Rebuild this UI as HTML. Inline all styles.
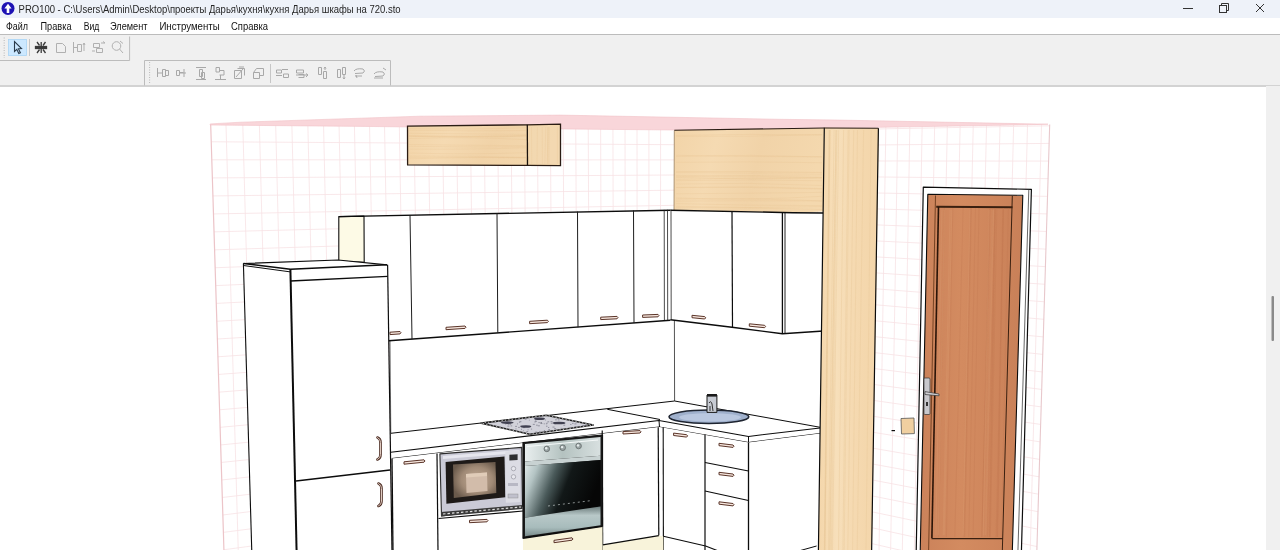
<!DOCTYPE html>
<html><head><meta charset="utf-8">
<style>
html,body{margin:0;padding:0;width:1280px;height:550px;overflow:hidden;background:#fff;font-family:"Liberation Sans",sans-serif;}
#title{position:absolute;left:0;top:0;width:1280px;height:18px;background:#eef2f9;}
#menu{position:absolute;left:0;top:18px;width:1280px;height:16px;background:#fff;border-bottom:1px solid #bcbcbc;}
#tb{position:absolute;left:0;top:35px;width:1280px;height:49.5px;background:#f0f0f0;border-bottom:2px solid #d3d3d3;}
svg{position:absolute;left:0;top:0;will-change:transform;}
</style></head><body>
<div id="title"></div>
<div id="menu"></div>
<div id="tb"></div>
<svg width="1280" height="550" viewBox="0 0 1280 550" font-family="Liberation Sans, sans-serif">
  <!-- title -->
  <circle cx="8" cy="8.4" r="6.5" fill="#1e12b4"/>
  <path d="M8 3.8 L11.6 8.4 L9.3 8.4 L9.3 13 L6.7 13 L6.7 8.4 L4.4 8.4 Z" fill="#fff"/>
  <text x="18.6" y="12.6" font-size="11" fill="#262626" textLength="382" lengthAdjust="spacingAndGlyphs">PRO100 - C:\Users\Admin\Desktop\проекты Дарья\кухня\кухня Дарья шкафы на 720.sto</text>
  <!-- window controls -->
  <rect x="1183" y="8" width="10" height="1" fill="#333"/>
  <g fill="none" stroke="#333" stroke-width="1">
    <rect x="1219.5" y="5.5" width="7" height="7"/>
    <path d="M1221.5 5.5 V3.5 H1228.5 V10.5 H1226.5"/>
    <path d="M1256 4 L1264 12 M1264 4 L1256 12"/>
  </g>
  <!-- menu -->
  <g font-size="10" fill="#111">
    <text x="6" y="29.5" textLength="22" lengthAdjust="spacingAndGlyphs">Файл</text>
    <text x="40.5" y="29.5" textLength="31" lengthAdjust="spacingAndGlyphs">Правка</text>
    <text x="83.7" y="29.5" textLength="15.5" lengthAdjust="spacingAndGlyphs">Вид</text>
    <text x="110" y="29.5" textLength="37.5" lengthAdjust="spacingAndGlyphs">Элемент</text>
    <text x="159.4" y="29.5" textLength="60.3" lengthAdjust="spacingAndGlyphs">Инструменты</text>
    <text x="231" y="29.5" textLength="37" lengthAdjust="spacingAndGlyphs">Справка</text>
  </g>

  <!-- toolbar 1 -->
  <path d="M129.6 36.5 V60.5 H0" fill="none" stroke="#bcbcbc" stroke-width="1"/>
  <path d="M4.2 37.5 V58" stroke="#b8b8b8" stroke-width="1" stroke-dasharray="1 1.5"/>
  <rect x="8.5" y="39.5" width="18" height="16" fill="#cce8ff" stroke="#a8d4f5" stroke-width="0.8"/>
  <rect x="29" y="39" width="1" height="17" fill="#c6c6c6"/>
  <path d="M14.5 41.5 L14.5 51.5 L16.8 49.3 L18.8 53.5 L20.4 52.7 L18.4 48.7 L21.5 48.5 Z" fill="none" stroke="#2a3a4a" stroke-width="1.1"/>
  <g stroke="#3a3a3a" stroke-width="1.3" fill="none">
    <path d="M35.5 47.5 H47 M37 42 L39.5 45.5 M45.5 42 L43 45.5 M37 53 L39.5 49.5 M45.5 53 L43 49.5 M41.2 42 V53"/>
    <rect x="35.5" y="46.5" width="11" height="2" fill="#3a3a3a"/>
  </g>
  <g stroke="#b0b0b0" stroke-width="1" fill="none">
    <path d="M56.5 43.5 H62.5 L65.5 46.5 V52.5 H56.5 Z"/>
    <path d="M73.5 42 V53 M74 47.5 H77 M77.5 44.5 H81.5 V51.5 H77.5 Z M84 43 V51 M84 43 L83 45 M84 43 L85 45"/>
    <path d="M93.5 43.5 H99.5 V47.5 H93.5 Z M96.5 48.5 H102.5 V52.5 H96.5 Z M101 43 H105 L103 41.5 M92 51 H95"/>
    <circle cx="116.5" cy="46" r="4.3"/><path d="M119.5 49 L123 53 M120 41 L123 43.5"/>
  </g>
  <!-- toolbar 2 -->
  <path d="M144.5 85.5 V60.5 H390.5 V85.5" fill="none" stroke="#bcbcbc" stroke-width="1"/>
  <path d="M149.6 62 V84" stroke="#b8b8b8" stroke-width="1" stroke-dasharray="1 1.5"/>
  <rect x="270" y="64" width="1" height="19" fill="#c6c6c6"/>
  <g stroke="#a8a8a8" stroke-width="1" fill="none">
    <path d="M157.5 68 V77 M158 73 H163 M162.5 69.5 H165.5 V76.5 H162.5 Z M165.5 70.5 H168.5 V75.5 H165.5"/>
    <path d="M176.5 70.5 H179.5 V75.5 H176.5 Z M179.5 72.5 H183.5 M184 69 V77 M180 73 H186"/>
    <path d="M196 67.5 H206 M199.5 69.5 H202.5 V76.5 H199.5 Z M201.5 72.5 H204.5 V78.5 H201.5 Z M196 79.5 H206"/>
    <path d="M216 67.5 V72 H219.5 V67.5 Z M219.5 70.5 H224 V75 H219.5 M220.5 75 V79 M215 79.5 H226"/>
    <path d="M234.5 70.5 H241.5 V78.5 H234.5 Z M237.5 68.5 H244.5 V75.5 M239 67 L244 67 M236 77 L243 69"/>
    <path d="M253.5 72.5 H259.5 V78.5 H253.5 Z M256.5 68.5 H263.5 V75.5 H259.5 M253.5 72.5 L256.5 68.5"/>
    <path d="M276.5 70 H281.5 V73 H276.5 Z M283.5 74 H288.5 V77.5 H283.5 Z M276 75.5 H282 M282 69.5 H288"/>
    <path d="M296.5 70 H303.5 V73 H296.5 Z M298.5 74.5 H304 V77.5 H298.5 M296 75 H308 L306 73.5 M306 77 L308 75"/>
    <path d="M318.5 67.5 H321.5 V74.5 H318.5 Z M323.5 71.5 H326.5 V78.5 H323.5 Z M325 67 V70 M324 68.5 L325 67 L326 68.5"/>
    <path d="M337.5 69.5 H340.5 V77.5 H337.5 Z M342.5 67.5 H345.5 V74.5 H342.5 Z M344 75 V79 M343 77.5 L344 79 L345 77.5"/>
    <path d="M354 71 Q356 68 363 69 Q366 71 363 73 L355 73.5 M356 75 L357 78 M355 76 H362"/>
    <path d="M374 74 Q376 71 383 72 Q386 74 383 76 L375 76.5 M374 78 H383 M383 68 L386 70"/>
  </g>
  <!-- canvas -->
  <g id="scene">
<defs>
<clipPath id="cl"><path d="M210.7 124.6 L674 130 L674 552 L224 552 Z"/></clipPath>
<clipPath id="cr"><path d="M674 130 L1049.7 124.4 L1036.8 552 L674 552 Z"/></clipPath>
<linearGradient id="wood1" x1="0" y1="0" x2="1" y2="0.15"><stop offset="0" stop-color="#f2d4a8"/><stop offset="0.3" stop-color="#f5dab2"/><stop offset="0.6" stop-color="#f1d3a8"/><stop offset="1" stop-color="#f4d8ae"/></linearGradient>
<linearGradient id="woodv" x1="0" y1="0" x2="1" y2="0"><stop offset="0" stop-color="#f4d6aa"/><stop offset="0.3" stop-color="#f7dfba"/><stop offset="0.6" stop-color="#f5d9b0"/><stop offset="1" stop-color="#f3d5a9"/></linearGradient>
<linearGradient id="doorg" x1="0" y1="0" x2="1" y2="0"><stop offset="0" stop-color="#cb825a"/><stop offset="0.4" stop-color="#d38b60"/><stop offset="0.7" stop-color="#cf865c"/><stop offset="1" stop-color="#c88058"/></linearGradient>
<linearGradient id="ovenwin" x1="0" y1="0" x2="1" y2="0.3"><stop offset="0" stop-color="#e4ecec"/><stop offset="0.18" stop-color="#b4c4c4"/><stop offset="0.42" stop-color="#4a5a5a"/><stop offset="0.62" stop-color="#121818"/><stop offset="1" stop-color="#060606"/></linearGradient>
<linearGradient id="silver" x1="0" y1="0" x2="1" y2="0"><stop offset="0" stop-color="#e8eeee"/><stop offset="0.5" stop-color="#b4c2c0"/><stop offset="1" stop-color="#d8e0e0"/></linearGradient>
<linearGradient id="silver2" x1="0" y1="0" x2="0" y2="1"><stop offset="0" stop-color="#6a7a7a"/><stop offset="0.3" stop-color="#b8c8c8"/><stop offset="0.7" stop-color="#a8bcbc"/><stop offset="1" stop-color="#7a8c8c"/></linearGradient>
<radialGradient id="mwin" cx="0.55" cy="0.5" r="0.6"><stop offset="0" stop-color="#c4ac96"/><stop offset="0.6" stop-color="#a08a76"/><stop offset="1" stop-color="#6a5a4c"/></radialGradient>
</defs>
<g clip-path="url(#cl)"><path d="M225.8 118L238.3 552M242.6 118L254.6 552M259.2 118L270.7 552M275.5 118L286.6 552M291.7 118L302.3 552M307.7 118L317.8 552M323.4 118L333.1 552M338.9 118L348.2 552M354.3 118L363.0 552M369.4 118L377.8 552M384.4 118L392.3 552M399.2 118L406.6 552M413.8 118L420.8 552M428.2 118L434.7 552M442.4 118L448.6 552M456.5 118L462.2 552M470.3 118L475.7 552M484.1 118L489.0 552M497.6 118L502.1 552M511.0 118L515.1 552M524.3 118L528.0 552M537.3 118L540.7 552M550.3 118L553.3 552M563.1 118L565.7 552M575.7 118L578.0 552M588.2 118L590.1 552M600.6 118L602.1 552M612.9 118L614.0 552M625.0 118L625.8 552M637.0 118L637.4 552M648.9 118L648.9 552M660.6 118L660.3 552M200 105.3L690 114.5M200 123.5L690 129.7M200 141.7L690 144.8M200 159.8L690 159.9M200 178.0L690 174.9M200 196.1L690 190.0M200 214.2L690 205.0M200 232.2L690 220.0M200 250.3L690 235.0M200 268.3L690 250.0M200 286.3L690 264.9M200 304.2L690 279.9M200 322.2L690 294.8M200 340.1L690 309.6M200 358.0L690 324.5M200 375.8L690 339.4M200 393.7L690 354.2M200 411.5L690 369.0M200 429.2L690 383.7M200 447.0L690 398.5M200 464.7L690 413.2M200 482.4L690 428.0M200 500.1L690 442.7M200 517.8L690 457.3M200 535.4L690 472.0M200 553.0L690 486.6M200 570.6L690 501.2" stroke="#f7e2e5" stroke-width="0.8" fill="none"/></g>
<g clip-path="url(#cr)"><path d="M721.8 118L719.7 552M730.6 118L728.3 552M739.6 118L737.0 552M748.8 118L745.9 552M758.2 118L755.0 552M767.8 118L764.3 552M777.6 118L773.8 552M787.5 118L783.5 552M797.7 118L793.4 552M808.0 118L803.4 552M818.6 118L813.6 552M829.3 118L824.1 552M840.3 118L834.7 552M851.4 118L845.5 552M862.7 118L856.5 552M874.3 118L867.7 552M886.0 118L879.0 552M897.9 118L890.6 552M910.0 118L902.3 552M922.3 118L914.3 552M934.8 118L926.4 552M947.5 118L938.7 552M960.3 118L951.2 552M973.4 118L963.9 552M986.7 118L976.8 552M1000.2 118L989.9 552M1013.8 118L1003.1 552M1027.7 118L1016.6 552M1041.7 118L1030.2 552M1056.0 118L1044.0 552M660 119.1L1060 107.9M660 133.0L1060 125.6M660 146.9L1060 143.3M660 160.8L1060 161.1M660 174.8L1060 178.8M660 188.7L1060 196.6M660 202.6L1060 214.3M660 216.5L1060 232.0M660 230.5L1060 249.8M660 244.4L1060 267.5M660 258.3L1060 285.3M660 272.2L1060 303.0M660 286.2L1060 320.7M660 300.1L1060 338.5M660 314.0L1060 356.2M660 327.9L1060 374.0M660 341.9L1060 391.7M660 355.8L1060 409.4M660 369.7L1060 427.2M660 383.6L1060 444.9M660 397.6L1060 462.7M660 411.5L1060 480.4M660 425.4L1060 498.1M660 439.3L1060 515.9M660 453.3L1060 533.6M660 467.2L1060 551.4M660 481.1L1060 569.1M660 495.0L1060 586.8" stroke="#f7e2e5" stroke-width="0.8" fill="none"/></g>
<path d="M210.7 124.6 L224 552" stroke="#ecc4c8" stroke-width="1.2" fill="none"/>
<path d="M1049.7 124.4 L1036.8 552" stroke="#e8c8cc" stroke-width="1.1" fill="none"/>
<path d="M210.3 123.9 L241 122.2 L420 116.2 L560 115.1 L780 119.3 L840 120.1 L1048 124.2 L1027 124.8 L879.5 127.3 L780 128.9 L673.4 130 L560 128.9 L372 126.5 L210 125 Z" fill="#f9d6da" stroke="#f2c2c7" stroke-width="0.6"/>
<path d="M407.5 126.2 L527 124.8 L560.5 124.2 L560.5 165.6 L527 165.4 L407.6 164.8 Z" fill="url(#wood1)" stroke="#2a1c14" stroke-width="1.3"/>
<path d="M527.3 124.8 L527.5 165.4" stroke="#1a120c" stroke-width="1.3"/>
<path d="M530 126 L559 126 L559 164 L530 164 Z" fill="#f2d9b2" opacity="0.6"/>
<path d="M674.3 130.3 L824.3 128 L824 211.5 L792.6 212.7 L674 211 Z" fill="url(#wood1)" stroke="none"/>
<path d="M674.3 130.6 L674 211" stroke="#9a8060" stroke-width="0.8"/>
<path d="M390.0 340.5 L670.4 320.2 L674.0 320.0 L823.0 331.0 L820.2 427.3 L674.6 401.0 L390.8 433.3 Z" fill="#ffffff" stroke="none" stroke-width="1.2" stroke-linejoin="round"/>
<path d="M390.0 340.0 L390.8 433.3" stroke="#666" stroke-width="0.90" fill="none" stroke-linejoin="round"/>
<path d="M674.4 320.0 L674.6 401.0" stroke="#555" stroke-width="1.00" fill="none" stroke-linejoin="round"/>
<path d="M409 136.3 Q470 136.5 526 135.9M409 149.1 Q470 149.6 526 147.8M409 128.5 Q470 129.8 526 127.7M409 136.2 Q470 138.2 526 136.1M409 157.3 Q470 157.2 526 157.7M409 133.3 Q470 133.8 526 134.4M409 146.3 Q470 147.3 526 146.8M409 130.2 Q470 131.3 526 130.5M409 138.5 Q470 136.7 526 139.6M409 144.5 Q470 145.4 526 145.7M409 153.0 Q470 154.7 526 152.7M409 156.0 Q470 155.8 526 157.3M409 158.8 Q470 157.2 526 157.7M409 135.6 Q470 137.5 526 135.4M676 180.6 Q750 179.4 822 180.7M676 162.3 Q750 161.4 822 162.7M676 177.4 Q750 179.8 822 178.1M676 203.6 Q750 205.7 822 205.6M676 184.0 Q750 182.0 822 185.5M676 206.3 Q750 208.7 822 206.6M676 187.3 Q750 185.5 822 188.6M676 176.6 Q750 175.3 822 174.8M676 197.9 Q750 200.8 822 196.3M676 193.8 Q750 193.3 822 192.4M676 155.3 Q750 156.9 822 156.8M676 136.4 Q750 137.0 822 134.5M676 187.6 Q750 186.6 822 189.1M676 207.5 Q750 207.6 822 209.5M676 156.5 Q750 154.0 822 156.9M676 135.4 Q750 133.6 822 135.0M676 179.4 Q750 177.3 822 177.6M676 199.0 Q750 197.8 822 200.8M676 201.1 Q750 200.4 822 201.0M676 172.5 Q750 173.4 822 172.9M676 175.5 Q750 176.2 822 177.3M676 171.5 Q750 171.1 822 172.4" stroke="#e4c090" stroke-width="0.8" fill="none" opacity="0.3"/>
<path d="M537.4 127 L537.0 164M557.4 127 L557.4 164M545.8 127 L544.8 164M542.2 127 L542.4 164M531.5 127 L531.8 164M548.1 127 L547.2 164M547.9 127 L547.9 164M549.3 127 L549.0 164" stroke="#e4c090" stroke-width="0.8" fill="none" opacity="0.3"/>
<path d="M338.8 216.6 L670.4 210.2 L670.4 319.7 L388.8 340.8 L364.0 262.0 Z" fill="#ffffff" stroke="none" stroke-width="1.2" stroke-linejoin="round"/>
<path d="M338.8 216.6 L364.0 216.1 L364.2 262.2 L338.8 261.0 Z" fill="#fdfae6" stroke="#0c0c0c" stroke-width="1.1" stroke-linejoin="round"/>
<path d="M338.8 216.6 L670.4 210.2" stroke="#0c0c0c" stroke-width="1.40" fill="none" stroke-linejoin="round"/>
<path d="M388.8 340.8 L670.4 320.2" stroke="#0c0c0c" stroke-width="1.40" fill="none" stroke-linejoin="round"/>
<path d="M410.0 215.0 L412.0 339.1" stroke="#1e1e1e" stroke-width="1.00" fill="none" stroke-linejoin="round"/>
<path d="M497.0 213.2 L497.8 332.9" stroke="#1e1e1e" stroke-width="1.00" fill="none" stroke-linejoin="round"/>
<path d="M577.5 211.6 L578.0 327.2" stroke="#1e1e1e" stroke-width="1.00" fill="none" stroke-linejoin="round"/>
<path d="M633.5 210.5 L634.0 323.1" stroke="#1e1e1e" stroke-width="1.00" fill="none" stroke-linejoin="round"/>
<path d="M670.4 210.2 L792.6 212.7 L823.5 213.0 L823.5 331.0 L782.4 333.7 L732.0 327.3 L670.4 319.7 Z" fill="#ffffff" stroke="none" stroke-width="1.2" stroke-linejoin="round"/>
<path d="M670.4 210.2 L792.6 212.7 L823.5 213.0" stroke="#0c0c0c" stroke-width="1.40" fill="none" stroke-linejoin="round"/>
<path d="M670.4 319.7 L732.0 327.3 L782.4 333.7 L823.5 331.0" stroke="#0c0c0c" stroke-width="1.40" fill="none" stroke-linejoin="round"/>
<path d="M732.0 211.4 L732.5 327.3" stroke="#0c0c0c" stroke-width="1.20" fill="none" stroke-linejoin="round"/>
<path d="M664.2 209.9 L664.4 320.0" stroke="#1e1e1e" stroke-width="0.80" fill="none" stroke-linejoin="round"/>
<path d="M667.5 209.8 L667.7 320.0" stroke="#1e1e1e" stroke-width="0.80" fill="none" stroke-linejoin="round"/>
<path d="M671.0 209.8 L671.2 320.0" stroke="#1e1e1e" stroke-width="0.80" fill="none" stroke-linejoin="round"/>
<path d="M782.4 212.5 L782.4 333.7" stroke="#0c0c0c" stroke-width="1.30" fill="none" stroke-linejoin="round"/>
<path d="M785.0 212.6 L785.0 333.4" stroke="#0c0c0c" stroke-width="0.90" fill="none" stroke-linejoin="round"/>
<path d="M390.0 332.2 L400.0 331.5 L401.0 332.7 L400.0 333.9 L390.0 334.6 Z" fill="#f6e6de" stroke="#5a3428" stroke-width="1"/>
<path d="M446.0 327.3 L465.0 326.0 L466.0 327.2 L465.0 328.4 L446.0 329.7 Z" fill="#f6e6de" stroke="#5a3428" stroke-width="1"/>
<path d="M529.6 321.3 L547.4 320.2 L548.4 321.4 L547.4 322.6 L529.6 323.7 Z" fill="#f6e6de" stroke="#5a3428" stroke-width="1"/>
<path d="M600.7 317.2 L617.0 316.4 L618.0 317.6 L617.0 318.8 L600.7 319.6 Z" fill="#f6e6de" stroke="#5a3428" stroke-width="1"/>
<path d="M642.6 315.0 L658.0 314.4 L659.0 315.6 L658.0 316.8 L642.6 317.4 Z" fill="#f6e6de" stroke="#5a3428" stroke-width="1"/>
<path d="M692.0 315.3 L704.7 316.6 L705.7 317.8 L704.7 319.0 L692.0 317.7 Z" fill="#f6e6de" stroke="#5a3428" stroke-width="1"/>
<path d="M749.3 323.8 L764.6 325.3 L765.6 326.5 L764.6 327.7 L749.3 326.2 Z" fill="#f6e6de" stroke="#5a3428" stroke-width="1"/>
<path d="M390.8 433.3 L674.6 401.0 L820.2 427.3 L820.0 433.6 L748.5 442.0 L661.0 426.5 L392.0 458.5 Z" fill="#ffffff" stroke="none" stroke-width="1.2" stroke-linejoin="round"/>
<path d="M390.8 433.3 L674.6 401.0 L820.2 427.3" stroke="#0c0c0c" stroke-width="1.00" fill="none" stroke-linejoin="round"/>
<path d="M390.8 452.2 L659.0 420.5 L748.5 436.4 L820.0 428.0" stroke="#0c0c0c" stroke-width="1.05" fill="none" stroke-linejoin="round"/>
<path d="M392.0 458.5 L659.0 427.0 L748.5 442.5 L820.0 433.6" stroke="#0c0c0c" stroke-width="1.05" fill="none" stroke-linejoin="round"/>
<path d="M607.3 409.3 L660.0 419.5" stroke="#0c0c0c" stroke-width="1.00" fill="none" stroke-linejoin="round"/>
<path d="M659.0 420.5 L659.5 427.0" stroke="#0c0c0c" stroke-width="1.00" fill="none" stroke-linejoin="round"/>
<path d="M748.5 436.4 L748.5 442.5" stroke="#0c0c0c" stroke-width="1.00" fill="none" stroke-linejoin="round"/>
<path d="M392.0 458.5 L659.0 427.0 L662.7 427.5 L748.5 442.5 L820.0 433.6 L818.0 552.0 L392.0 552.0 Z" fill="#ffffff" stroke="none" stroke-width="1.2" stroke-linejoin="round"/>
<path d="M392.0 458.5 L393.0 552.0" stroke="#0c0c0c" stroke-width="1.30" fill="none" stroke-linejoin="round"/>
<path d="M437.0 453.5 L438.0 552.0" stroke="#0c0c0c" stroke-width="1.20" fill="none" stroke-linejoin="round"/>
<path d="M602.2 430.5 L602.7 552.0" stroke="#0c0c0c" stroke-width="1.20" fill="none" stroke-linejoin="round"/>
<path d="M658.2 427.3 L658.8 535.6" stroke="#0c0c0c" stroke-width="1.20" fill="none" stroke-linejoin="round"/>
<path d="M663.2 427.3 L663.4 552.0" stroke="#0c0c0c" stroke-width="1.10" fill="none" stroke-linejoin="round"/>
<path d="M705.0 434.5 L705.0 552.0" stroke="#0c0c0c" stroke-width="1.20" fill="none" stroke-linejoin="round"/>
<path d="M748.5 442.5 L748.5 552.0" stroke="#0c0c0c" stroke-width="1.30" fill="none" stroke-linejoin="round"/>
<path d="M705.0 462.5 L748.5 471.0" stroke="#0c0c0c" stroke-width="1.10" fill="none" stroke-linejoin="round"/>
<path d="M705.0 491.0 L748.5 500.5" stroke="#0c0c0c" stroke-width="1.10" fill="none" stroke-linejoin="round"/>
<path d="M404.0 461.8 L424.0 459.8 L425.0 461.0 L424.0 462.2 L404.0 464.2 Z" fill="#f6e6de" stroke="#5a3428" stroke-width="1"/>
<path d="M469.5 520.3 L487.0 519.4 L488.0 520.6 L487.0 521.8 L469.5 522.7 Z" fill="#f6e6de" stroke="#5a3428" stroke-width="1"/>
<path d="M623.0 431.6 L640.0 430.6 L641.0 431.8 L640.0 433.0 L623.0 434.0 Z" fill="#f6e6de" stroke="#5a3428" stroke-width="1"/>
<path d="M673.6 433.1 L686.6 434.7 L687.6 435.9 L686.6 437.1 L673.6 435.5 Z" fill="#f6e6de" stroke="#5a3428" stroke-width="1"/>
<path d="M719.0 443.3 L733.0 445.0 L734.0 446.2 L733.0 447.4 L719.0 445.7 Z" fill="#f6e6de" stroke="#5a3428" stroke-width="1"/>
<path d="M719.0 472.3 L733.0 474.0 L734.0 475.2 L733.0 476.4 L719.0 474.7 Z" fill="#f6e6de" stroke="#5a3428" stroke-width="1"/>
<path d="M719.0 501.8 L733.0 503.5 L734.0 504.7 L733.0 505.9 L719.0 504.2 Z" fill="#f6e6de" stroke="#5a3428" stroke-width="1"/>
<path d="M602.7 544.9 L658.8 535.6 L663.4 536.2 L663.4 552.0 L602.7 552.0 Z" fill="#f8f3da" stroke="none" stroke-width="1.2" stroke-linejoin="round"/>
<path d="M602.7 544.9 L658.8 535.6" stroke="#0c0c0c" stroke-width="1.10" fill="none" stroke-linejoin="round"/>
<path d="M663.4 536.2 L705.6 546.0 L721.0 552.0" stroke="#0c0c0c" stroke-width="1.10" fill="none" stroke-linejoin="round"/>
<path d="M816.6 546.0 L795.0 552.0" stroke="#0c0c0c" stroke-width="1.00" fill="none" stroke-linejoin="round"/>
<path d="M439.9 453.9 L521.7 447.4 L522.5 506.2 L441.5 516.0 Z" fill="#cacad6" stroke="#2a2a2a" stroke-width="1.1" stroke-linejoin="round"/>
<path d="M443.0 456.0 L519.0 450.0 L519.0 453.0 L443.0 459.0 Z" fill="#e6e6ee" stroke="none" stroke-width="1.2" stroke-linejoin="round"/>
<path d="M445.6 462.0 L504.5 456.4 L505.3 497.2 L446.4 503.8 Z" fill="#1e1a18" stroke="none" stroke-width="1.2" stroke-linejoin="round"/>
<path d="M453.0 464.5 L495.5 462.0 L496.3 493.0 L453.8 498.0 Z" fill="url(#mwin)" stroke="none" stroke-width="1.2" stroke-linejoin="round"/>
<path d="M466.0 474.0 L487.0 472.5 L487.5 491.0 L466.5 493.0 Z" fill="#d2bcaa" stroke="none" stroke-width="1.2" stroke-linejoin="round"/>
<path d="M466.0 474.0 L487.0 472.5 L487.0 476.0 L466.0 477.5 Z" fill="#e0ccb8" stroke="none" stroke-width="1.2" stroke-linejoin="round"/>
<path d="M505.3 451.4 L520.0 450.2 L520.5 502.0 L505.8 502.8 Z" fill="#dcdce4" stroke="none" stroke-width="1.2" stroke-linejoin="round"/>
<path d="M509.4 454.7 L517.6 454.2 L517.6 460.1 L509.4 460.6 Z" fill="#2e2e30" stroke="none" stroke-width="1.2" stroke-linejoin="round"/>
<circle cx="513.5" cy="468.6" r="2.2" fill="#e8e8ee" stroke="#8a8a94" stroke-width="0.6"/>
<circle cx="513.5" cy="476.8" r="2.2" fill="#e8e8ee" stroke="#8a8a94" stroke-width="0.6"/>
<rect x="508" y="483" width="10" height="3" fill="#b8b8c4"/><rect x="508" y="494" width="10" height="4" fill="#c0c0cc" stroke="#888" stroke-width="0.4"/>
<path d="M441.0 512.0 L522.5 505.0 L522.5 509.0 L441.0 516.5 Z" fill="#3a3a3a" stroke="none" stroke-width="1.2" stroke-linejoin="round"/>
<path d="M438.5 518.5 L523.0 511.0" stroke="#0c0c0c" stroke-width="1.10" fill="none" stroke-linejoin="round"/>
<path d="M443 514 L521 507" stroke="#e4e4e4" stroke-width="1.2" stroke-dasharray="2.5 2"/>
<path d="M523.0 442.5 L602.5 435.0 L602.5 526.4 L523.0 538.2 Z" fill="#1a1a1a" stroke="#111" stroke-width="1.2" stroke-linejoin="round"/>
<path d="M525.0 444.0 L600.5 437.0 L600.5 455.7 L525.0 461.4 Z" fill="url(#silver)" stroke="none" stroke-width="1.2" stroke-linejoin="round"/>
<path d="M527 446.5 L598 440" stroke="#f4f8f8" stroke-width="1.2"/>
<circle cx="546.8" cy="448.9" r="2.8" fill="#9aa4a4" stroke="#5a6262" stroke-width="0.7"/><circle cx="546.1999999999999" cy="448.29999999999995" r="1.2" fill="#e8eeee"/>
<circle cx="562.7" cy="447.7" r="2.8" fill="#9aa4a4" stroke="#5a6262" stroke-width="0.7"/><circle cx="562.1" cy="447.09999999999997" r="1.2" fill="#e8eeee"/>
<circle cx="578.6" cy="446" r="2.8" fill="#9aa4a4" stroke="#5a6262" stroke-width="0.7"/><circle cx="578.0" cy="445.4" r="1.2" fill="#e8eeee"/>
<path d="M525.0 461.4 L600.5 455.7 L600.5 460.0 L525.0 466.0 Z" fill="#c8d2d2" stroke="none" stroke-width="1.2" stroke-linejoin="round"/>
<path d="M525.0 466.0 L600.5 460.0 L600.5 506.4 L525.0 517.7 Z" fill="url(#ovenwin)" stroke="none" stroke-width="1.2" stroke-linejoin="round"/>
<path d="M548 506 L592 500.5" stroke="#d0d8d8" stroke-width="0.8" stroke-dasharray="2 3" opacity="0.8"/>
<path d="M525.0 517.7 L600.5 506.4 L600.5 525.2 L525.0 536.2 Z" fill="url(#silver2)" stroke="none" stroke-width="1.2" stroke-linejoin="round"/>
<path d="M523.0 538.2 L602.5 526.4 L602.5 552.0 L523.0 552.0 Z" fill="#f8f3da" stroke="none" stroke-width="1.2" stroke-linejoin="round"/>
<path d="M523.0 538.2 L602.5 526.4" stroke="#0c0c0c" stroke-width="1.40" fill="none" stroke-linejoin="round"/>
<path d="M554.0 540.3 L572.0 537.8 L573.0 539.0 L572.0 540.2 L554.0 542.7 Z" fill="#f6e6de" stroke="#5a3428" stroke-width="1"/>
<path d="M481.3 423.1 L546.3 415.3 L593.2 425.0 L529.7 434.3 Z" fill="#d2d2da" stroke="#202020" stroke-width="1.6" stroke-linejoin="round"/>
<path d="M481.3 423.1 L546.3 415.3 L593.2 425 L529.7 434.3 Z" fill="none" stroke="#e8e8e8" stroke-width="0.8" stroke-dasharray="1.2 2.2"/>
<path d="M537.8 425.8h2.1M536.1 425.2h1.6M518.1 427.4h1.7M537.4 418.0h1.2M526.4 431.5h1.8M528.9 420.1h0.8M505.4 424.3h0.8M532.8 424.4h2.0M546.0 426.2h1.5M546.5 423.1h1.2M570.2 424.5h1.2M510.2 424.5h0.9M550.5 421.6h2.0M539.0 431.7h1.5M545.0 420.0h0.9M536.3 418.5h1.1M541.7 418.9h1.6M519.6 421.7h1.8M521.0 429.3h1.0M519.0 422.2h1.2M543.9 430.6h1.1M548.3 429.6h1.7M507.7 424.3h1.9M517.0 423.9h0.9M515.4 428.9h1.1M538.4 422.6h1.4M560.6 428.3h1.1M535.3 432.1h1.9M506.7 423.3h1.8M540.9 423.1h0.9M530.9 429.1h1.2M563.7 423.4h1.2M527.6 429.8h0.9M523.2 427.6h2.0M534.8 421.4h2.1M520.4 426.0h0.9M510.6 425.9h1.6M507.4 426.1h2.0M554.5 424.3h1.0M574.4 423.9h2.1M548.0 427.5h1.2M552.5 427.1h2.1M563.3 425.2h1.9M557.8 419.9h1.8M582.0 425.8h1.4M574.5 426.6h1.6M540.4 422.5h1.6M524.8 419.2h1.7M547.4 421.8h1.8M540.4 423.5h2.0M523.1 430.8h0.8M543.7 423.8h1.1M550.8 423.2h1.7M535.2 420.1h1.0M572.1 423.4h1.4M555.1 419.8h1.7M515.1 426.4h1.9M583.3 425.8h1.3M534.5 422.1h1.0M554.1 428.6h2.0M507.5 422.8h1.4M509.5 423.4h1.4M545.9 423.8h1.2" stroke="#7a7a88" stroke-width="0.9" fill="none" opacity="0.8"/>
<ellipse cx="507.2" cy="422.6" rx="6.5" ry="1.3" fill="#404050"/>
<ellipse cx="539.5" cy="418.7" rx="5.5" ry="1.3" fill="#404050"/>
<ellipse cx="525.8" cy="426.5" rx="5.5" ry="1.3" fill="#404050"/>
<ellipse cx="559" cy="423" rx="6.5" ry="1.3" fill="#404050"/>
<ellipse cx="708.9" cy="416.8" rx="39.9" ry="6.75" fill="#9fb0cc" stroke="#1e2430" stroke-width="1.6"/>
<ellipse cx="710" cy="417.3" rx="31" ry="4.2" fill="#b9c7df"/>
<path d="M707 395 L716.9 395 L716.9 412.4 L707 412.4 Z" fill="#c8ccd4" stroke="#1a1a1a" stroke-width="1"/>
<rect x="707" y="394" width="9.9" height="2.6" fill="#1a1a1a"/>
<path d="M709 403 Q711 400 712 404 L713 411 M710 406 L710 411" stroke="#333" stroke-width="1" fill="none"/>
<path d="M243.4 263.5 L338.1 260.0 L387.1 264.8 L392.0 552.0 L251.8 552.0 Z" fill="#ffffff" stroke="none" stroke-width="1.2" stroke-linejoin="round"/>
<path d="M243.4 263.5 L290.4 269.3 L387.1 264.8" stroke="#0c0c0c" stroke-width="1.50" fill="none" stroke-linejoin="round"/>
<path d="M243.4 263.5 L338.1 260.0 L387.1 264.8" stroke="#0c0c0c" stroke-width="1.20" fill="none" stroke-linejoin="round"/>
<path d="M243.4 265.5 L290.4 271.9" stroke="#0c0c0c" stroke-width="1.00" fill="none" stroke-linejoin="round"/>
<path d="M243.4 263.5 L251.8 552.0" stroke="#0c0c0c" stroke-width="1.10" fill="none" stroke-linejoin="round"/>
<path d="M290.4 269.3 L296.6 552.0" stroke="#0c0c0c" stroke-width="2.00" fill="none" stroke-linejoin="round"/>
<path d="M387.6 264.8 L392.0 552.0" stroke="#0c0c0c" stroke-width="1.20" fill="none" stroke-linejoin="round"/>
<path d="M290.4 281.0 L387.7 276.4" stroke="#0c0c0c" stroke-width="1.30" fill="none" stroke-linejoin="round"/>
<path d="M296.0 481.0 L390.0 470.0" stroke="#0c0c0c" stroke-width="1.40" fill="none" stroke-linejoin="round"/>
<path d="M377.5 437.5 Q380.5 438.5 380.5 442.5 L380.5 454.5 Q380.5 458.5 377.5 459.5" fill="none" stroke="#4a2a20" stroke-width="2.6" stroke-linecap="round"/>
<path d="M377.5 437.5 Q380.5 438.5 380.5 442.5 L380.5 454.5 Q380.5 458.5 377.5 459.5" fill="none" stroke="#f0ddd2" stroke-width="0.9" stroke-linecap="round"/>
<path d="M378.5 483.5 Q381.5 484.5 381.5 488.5 L381.5 501.0 Q381.5 505.0 378.5 506.0" fill="none" stroke="#4a2a20" stroke-width="2.6" stroke-linecap="round"/>
<path d="M378.5 483.5 Q381.5 484.5 381.5 488.5 L381.5 501.0 Q381.5 505.0 378.5 506.0" fill="none" stroke="#f0ddd2" stroke-width="0.9" stroke-linecap="round"/>
<path d="M824.3 127.8 L878.9 128.2 L871.9 552 L818.4 552 Z" fill="url(#woodv)" stroke="none"/>
<path d="M829.4 130 L824.7 550M829.9 130 L824.8 550M853.7 130 L847.8 550M863.6 130 L857.2 550M834.1 130 L828.5 550M829.1 130 L824.3 550M838.7 130 L832.5 550M830.1 130 L824.9 550M848.1 130 L842.9 550M857.5 130 L852.6 550M871.1 130 L866.0 550M837.0 130 L831.4 550M836.0 130 L829.6 550M849.2 130 L844.2 550M836.1 130 L830.1 550M843.6 130 L838.5 550" stroke="#e8c898" stroke-width="0.8" fill="none" opacity="0.5"/>
<path d="M824.3 127.8 L818.4 552 M878.4 128.2 L871.6 552" stroke="#0c0c0c" stroke-width="1.2" fill="none"/>
<path d="M674.3 130.3 L824.3 128 L878.4 128.2" stroke="#2a1c14" stroke-width="1.1" fill="none"/>
<path d="M923.3 187.1 L1031.4 189.3 L1021.4 552.0 L916.2 552.0 Z" fill="#ffffff" stroke="#0c0c0c" stroke-width="1.2" stroke-linejoin="round"/>
<path d="M1028.8 189.8 L1017.9 552.0" stroke="#555" stroke-width="0.90" fill="none" stroke-linejoin="round"/>
<path d="M927.8 194.2 L1022.8 195.3 L1012.3 552.0 L920.2 552.0 Z" fill="url(#doorg)" stroke="#0c0c0c" stroke-width="1.1" stroke-linejoin="round"/>
<path d="M935.5 195.5 L928.6 552.0" stroke="#6a3a1c" stroke-width="0.90" fill="none" stroke-linejoin="round"/>
<path d="M1012.3 196.0 L1002.3 552.0" stroke="#3a2010" stroke-width="1.00" fill="none" stroke-linejoin="round"/>
<path d="M936.2 206.7 L1012.5 207.2" stroke="#3a2010" stroke-width="2.00" fill="none" stroke-linejoin="round"/>
<path d="M938.5 207.0 L931.9 538.0" stroke="#2a1408" stroke-width="1.60" fill="none" stroke-linejoin="round"/>
<path d="M931.5 538.7 L1002.8 538.7" stroke="#3a2010" stroke-width="1.20" fill="none" stroke-linejoin="round"/>
<path d="M975.5 208 L968.8 537M992.4 208 L985.1 537M995.0 208 L989.2 537M944.3 208 L938.6 537M990.0 208 L981.9 537M970.7 208 L964.0 537M1003.5 208 L996.1 537M979.0 208 L973.1 537M995.4 208 L989.7 537M971.4 208 L964.8 537M952.8 208 L946.4 537M996.9 208 L990.3 537M989.7 208 L981.8 537M1002.8 208 L997.2 537M1008.4 208 L1001.5 537M994.9 208 L987.4 537M1003.5 208 L997.6 537M963.1 208 L954.8 537" stroke="#c27650" stroke-width="0.9" fill="none" opacity="0.35"/>
<path d="M970.0 210 L963.1 535M992.2 210 L985.2 535M941.9 210 L935.9 535M944.4 210 L938.3 535M951.8 210 L944.3 535M993.6 210 L985.5 535M950.1 210 L943.2 535M989.2 210 L983.2 535" stroke="#dc9a70" stroke-width="1.2" fill="none" opacity="0.3"/>
<rect x="924" y="378" width="6" height="36.5" rx="1" fill="#c8c8cc" stroke="#333" stroke-width="0.7"/>
<path d="M925 391.6 L939 394 L939 395.8 L925 394.5 Z" fill="#d0d0d4" stroke="#333" stroke-width="0.7"/>
<rect x="926" y="402" width="2" height="4" fill="#333"/>
<path d="M901.0 418.5 L914.0 418.0 L914.4 433.6 L901.5 434.0 Z" fill="#f0cfa0" stroke="#555" stroke-width="0.8" stroke-linejoin="round"/>
<path d="M891.5 430.6 L895.0 430.6" stroke="#0c0c0c" stroke-width="1.20" fill="none" stroke-linejoin="round"/>

</g>
  <!-- scrollbar -->
  <rect x="1266" y="86" width="14" height="464" fill="#f0f0f0"/>
  <rect x="1271.5" y="296" width="2.5" height="45" rx="1" fill="#8a8a8a"/>
</svg>
</body></html>
